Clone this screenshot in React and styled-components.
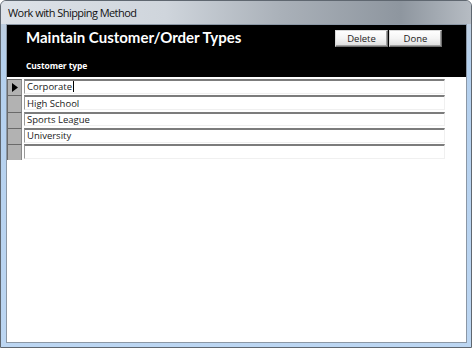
import React from "react";
import styled, { createGlobalStyle } from "styled-components";

const Global = createGlobalStyle`
  html, body { margin: 0; padding: 0; background: #ffffff; }
  body { font-family: "Open Sans", "Noto Sans", sans-serif; }
`;

const Window = styled.div`
  box-sizing: border-box;
  width: 472px;
  height: 348px;
  border: 1px solid #5f6770;
  border-radius: 6px 6px 0 0;
  background: linear-gradient(180deg, #c3ccd6 0px, #b4d0ee 60px, #bcd6f2 100%);
  display: flex;
  flex-direction: column;
  overflow: hidden;
`;

const TitleBar = styled.div`
  height: 22px;
  flex: none;
  display: flex;
  align-items: center;
  padding-left: 7px;
  padding-bottom: 1px;
  background: linear-gradient(90deg, #dde2e8 0%, #cfd5dc 35%, #a9b0b8 60%, #8e969f 85%, #b6bcc3 100%);
  font-family: "Open Sans", sans-serif;
  font-size: 11px;
  letter-spacing: -0.55px;
  color: #111;
`;

const Client = styled.div`
  flex: 1;
  margin: 0 4px 4px 5px;
  border: 1px solid #8b97a5;
  background: #ffffff;
  display: flex;
  flex-direction: column;
`;

const Header = styled.div`
  height: 52px;
  flex: none;
  background: #000;
  display: flex;
  justify-content: space-between;
  padding: 0 24px 0 19px;
`;

const HeaderLeft = styled.div`
  display: flex;
  flex-direction: column;
`;

const FormTitle = styled.div`
  color: #fff;
  font-family: Lato, "Open Sans", sans-serif;
  font-weight: 700;
  font-size: 15px;
  line-height: 20px;
  margin-top: 2px;
`;

const ColumnLabel = styled.div`
  color: #fff;
  font-family: "Open Sans", sans-serif;
  font-weight: 700;
  font-size: 8.5px;
  line-height: 12px;
  margin-top: 13px;
  letter-spacing: -0.1px;
`;

const Buttons = styled.div`
  display: flex;
  gap: 1px;
  margin-top: 5px;
  height: 17px;
`;

const Button = styled.div`
  box-sizing: border-box;
  width: ${(p) => p.w}px;
  height: 17px;
  border: 1px solid #6e6e6e;
  border-top-color: #d8d8d8;
  border-left-color: #d8d8d8;
  box-shadow: inset -1px -1px 0 #a0a0a0;
  background: linear-gradient(180deg, #ffffff 0%, #f4f4f4 50%, #dcdcdc 100%);
  display: flex;
  align-items: center;
  justify-content: center;
  font-family: "Open Sans", sans-serif;
  font-size: 9.5px;
  color: #222;
`;

const List = styled.div`
  padding-top: 2px;
  display: flex;
  flex-direction: column;
`;

const Row = styled.div`
  height: 16.25px;
  display: flex;
  align-items: stretch;
`;

const Selector = styled.div`
  box-sizing: border-box;
  width: 15px;
  flex: none;
  background: #b2b2b2;
  border-top: 1px solid #6a6a6a;
  border-left: 1px solid #6a6a6a;
  border-right: 1px solid #8a8a8a;
  display: flex;
  align-items: center;
  justify-content: center;
`;

const Field = styled.div`
  box-sizing: border-box;
  width: 421px;
  margin-left: 2px;
  margin-bottom: 1.5px;
  border-top: 2px solid #7c7c7c;
  border-left: 1px solid #9a9a9a;
  border-right: 1px solid #f0f0f0;
  border-bottom: 1px solid #f0f0f0;
  background: #fff;
  display: flex;
  align-items: center;
  padding-left: 2px;
  font-family: "Open Sans", sans-serif;
  font-size: 9.5px;
  color: #1a1a1a;
  white-space: nowrap;
`;

const Caret = styled.span`
  display: inline-block;
  width: 1px;
  height: 11px;
  background: #000;
  margin-left: 1px;
`;

const Pointer = () => (
  <svg width="6" height="9" viewBox="0 0 6 9">
    <path d="M0 0 L6 4.5 L0 9 Z" fill="#000" />
  </svg>
);

const rows = ["Corporate", "High School", "Sports League", "University", ""];

export default function App() {
  return (
    <>
      <Global />
      <Window>
        <TitleBar>Work with Shipping Method</TitleBar>
        <Client>
          <Header>
            <HeaderLeft>
              <FormTitle>Maintain Customer/Order Types</FormTitle>
              <ColumnLabel>Customer type</ColumnLabel>
            </HeaderLeft>
            <Buttons>
              <Button w={53}>Delete</Button>
              <Button w={53}>Done</Button>
            </Buttons>
          </Header>
          <List>
            {rows.map((r, i) => (
              <Row key={i}>
                <Selector>{i === 0 && <Pointer />}</Selector>
                <Field>
                  {r}
                  {i === 0 && <Caret />}
                </Field>
              </Row>
            ))}
          </List>
        </Client>
      </Window>
    </>
  );
}
